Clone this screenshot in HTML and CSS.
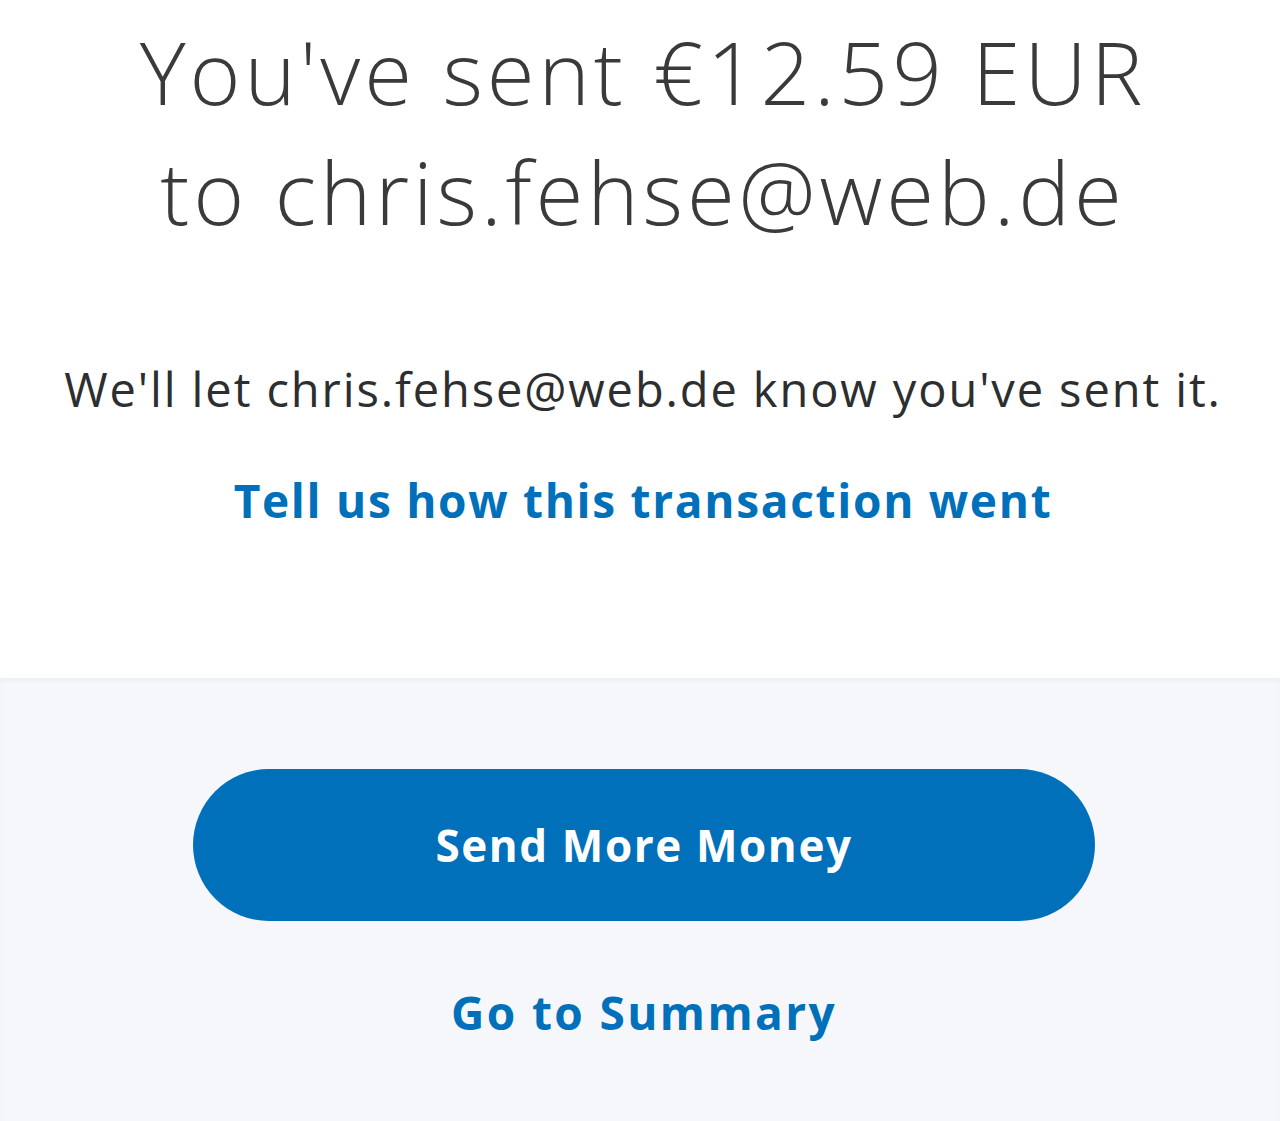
FILE: index.html
```html
<!DOCTYPE html>
<html lang="en">
<head>
<meta charset="utf-8">
<title>Payment sent</title>
<link rel="stylesheet" href="styles.css">
</head>
<body>
<main class="page">
  <section class="top">
    <h1 class="title">You've sent €12.59 EUR<br>to chris.fehse@web.de</h1>
    <p class="note">We'll let chris.fehse@web.de know you've sent it.</p>
    <a class="feedback" href="#">Tell us how this transaction went</a>
  </section>
  <section class="actions">
    <a class="btn" href="#">Send More Money</a>
    <a class="summary" href="#">Go to Summary</a>
  </section>
</main>
</body>
</html>
```

FILE: styles.css
```css
html, body {
  margin: 0;
  padding: 0;
  background: #ffffff;
}
.page {
  font-family: "Open Sans", "Liberation Sans", sans-serif;
  display: flex;
  flex-direction: column;
  min-height: 1121px;
}
.top {
  height: 678px;
  box-sizing: border-box;
  padding: 11px 0 0 6px;
  display: flex;
  flex-direction: column;
  align-items: center;
  text-align: center;
}
.title {
  margin: 0;
  font-size: 87px;
  font-weight: 300;
  line-height: 120px;
  color: #3a3a3a;
  letter-spacing: 3.9px;
}
.note {
  margin: 108px 0 0;
  font-size: 47px;
  line-height: 60px;
  color: #2c2e2f;
  letter-spacing: 1.9px;
}
.feedback {
  margin-top: 51px;
  font-size: 46px;
  font-weight: 700;
  line-height: 60px;
  letter-spacing: 1.7px;
  color: #0070ba;
  text-decoration: none;
}
.actions {
  flex: 1;
  background: #f5f7fa;
  box-shadow: inset 0 4px 6px -3px rgba(0,0,0,0.06);
  display: flex;
  flex-direction: column;
  align-items: center;
  padding: 91px 0 0 8px;
}
.btn {
  width: 902px;
  height: 152px;
  border-radius: 76px;
  background: #0070ba;
  color: #ffffff;
  font-size: 44px;
  font-weight: 700;
  letter-spacing: 1.6px;
  display: flex;
  align-items: center;
  justify-content: center;
  text-decoration: none;
}
.summary {
  margin-top: 61px;
  font-size: 46px;
  font-weight: 700;
  line-height: 60px;
  letter-spacing: 2.4px;
  color: #0070ba;
  text-decoration: none;
}
```
